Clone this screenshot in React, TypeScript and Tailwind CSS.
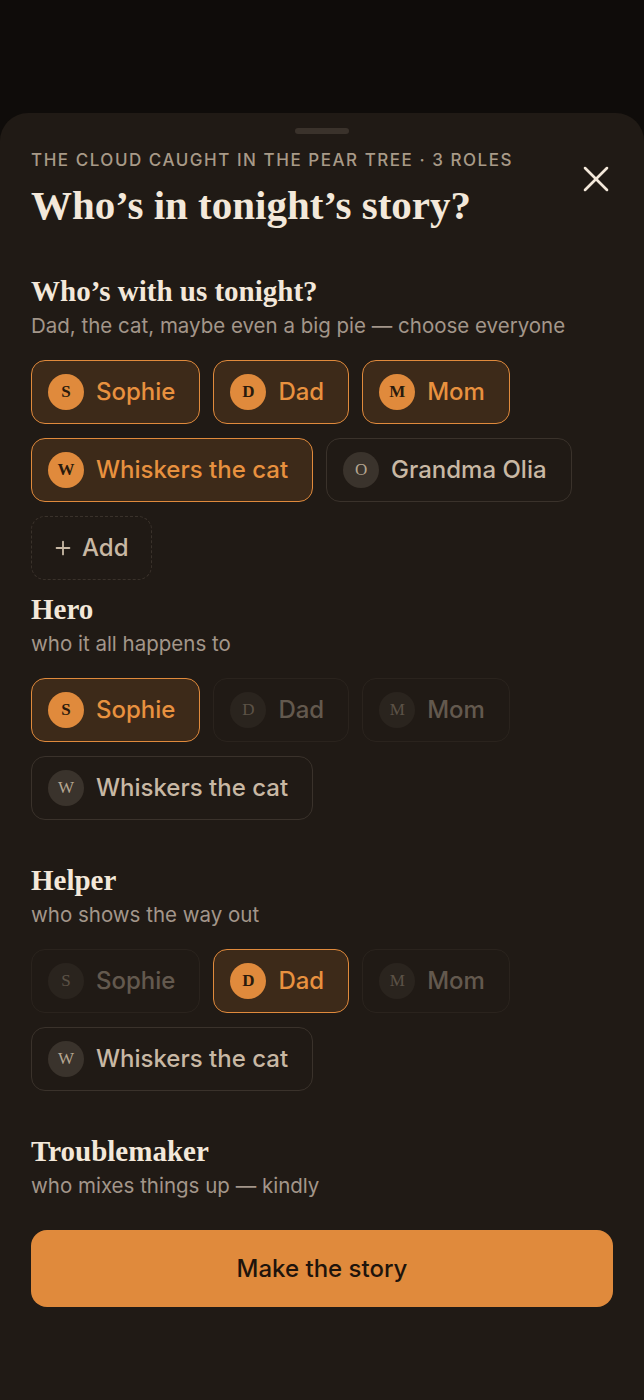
import { X, Plus } from "lucide-react";

type ChipState = "on" | "off" | "muted";

const sans = "font-['Inter','Noto_Sans',sans-serif]";
const serif = "font-['Liberation_Serif','DejaVu_Serif',serif]";

const Chip = ({ name, initial, state }: { name: string; initial?: string; state: ChipState }) => {
  const on = state === "on";
  return (
    <div
      className={`flex h-16 items-center gap-3 rounded-[14px] border-[1.5px] pl-4 pr-6 ${
        on ? "border-[#e08a3c] bg-[#3d2a19]" : "border-[#3a322b]"
      } ${state === "muted" ? "opacity-40" : ""}`}
    >
      <div
        className={`flex h-9 w-9 items-center justify-center rounded-full text-[17px] ${serif} ${
          on ? "bg-[#e08a3c] font-bold text-[#2a1a0c]" : "bg-[#3a332c] text-[#b5a691]"
        }`}
      >
        {initial ?? name[0]}
      </div>
      <span className={`text-[24px] font-medium ${on ? "text-[#e8913f]" : "text-[#c8b8a4]"}`}>{name}</span>
    </div>
  );
};

const SectionHead = ({ title, sub }: { title: string; sub: string }) => (
  <div>
    <h3 className={`${serif} text-[29px] font-bold leading-8 text-[#f3e8da]`}>{title}</h3>
    <p className="mt-[6px] text-[20.5px] leading-[26px] text-[#a3968a]">{sub}</p>
  </div>
);

const RoleSection = ({
  title,
  sub,
  picks,
}: {
  title: string;
  sub: string;
  picks: [string, ChipState][];
}) => (
  <section>
    <SectionHead title={title} sub={sub} />
    <div className="mt-[21px] flex flex-wrap gap-x-[13px] gap-y-[14px]">
      {picks.map(([n, s]) => (
        <Chip key={n} name={n} state={s} />
      ))}
    </div>
  </section>
);

export default function App() {
  return (
    <div className={`min-h-[1400px] bg-[#0f0c0a] pt-[113px] ${sans}`}>
      <div className="min-h-[1287px] rounded-t-[28px] bg-[#201a15] px-[31px] pb-10">
        <div className="mx-auto h-[6px] w-[54px] translate-y-[15px] rounded-full bg-[#3a322b]" />

        <div className="flex items-start justify-between pt-[30px]">
          <div>
            <p className="text-[17px] font-medium uppercase leading-[22px] tracking-[0.09em] text-[#a89a88]">
              The cloud caught in the pear tree · 3 roles
            </p>
            <h1 className={`${serif} mt-[10px] text-[41px] font-bold leading-[48px] text-[#f3e8da]`}>
              Who’s in tonight’s story?
            </h1>
          </div>
          <button className="mt-[8px] -mr-[5px] text-[#f3e8da]">
            <X size={44} strokeWidth={1.4} />
          </button>
        </div>

        <section className="mt-[46px]">
          <SectionHead title="Who’s with us tonight?" sub="Dad, the cat, maybe even a big pie — choose everyone" />
          <div className="mt-[21px] flex flex-wrap gap-x-[13px] gap-y-[14px]">
            <Chip name="Sophie" state="on" />
            <Chip name="Dad" state="on" />
            <Chip name="Mom" state="on" />
            <Chip name="Whiskers the cat" state="on" />
            <Chip name="Grandma Olia" initial="O" state="off" />
            <button className="flex h-16 items-center gap-2 rounded-[14px] border-[1.5px] border-dashed border-[#3a322b] pl-5 pr-[22px] text-[24px] font-medium text-[#c8b8a4]">
              <Plus size={22} strokeWidth={2} />
              Add
            </button>
          </div>
        </section>

        <div className="mt-[13px]">
          <RoleSection
            title="Hero"
            sub="who it all happens to"
            picks={[
              ["Sophie", "on"],
              ["Dad", "muted"],
              ["Mom", "muted"],
              ["Whiskers the cat", "off"],
            ]}
          />
        </div>

        <div className="mt-[44px]">
          <RoleSection
            title="Helper"
            sub="who shows the way out"
            picks={[
              ["Sophie", "muted"],
              ["Dad", "on"],
              ["Mom", "muted"],
              ["Whiskers the cat", "off"],
            ]}
          />
        </div>

        <div className="mt-[44px]">
          <SectionHead title="Troublemaker" sub="who mixes things up — kindly" />
        </div>

        <button className="mt-[31px] flex h-[77px] w-full items-center justify-center rounded-2xl bg-[#e08a3c] text-[24px] font-medium text-[#1e140c]">
          Make the story
        </button>
      </div>
    </div>
  );
}
